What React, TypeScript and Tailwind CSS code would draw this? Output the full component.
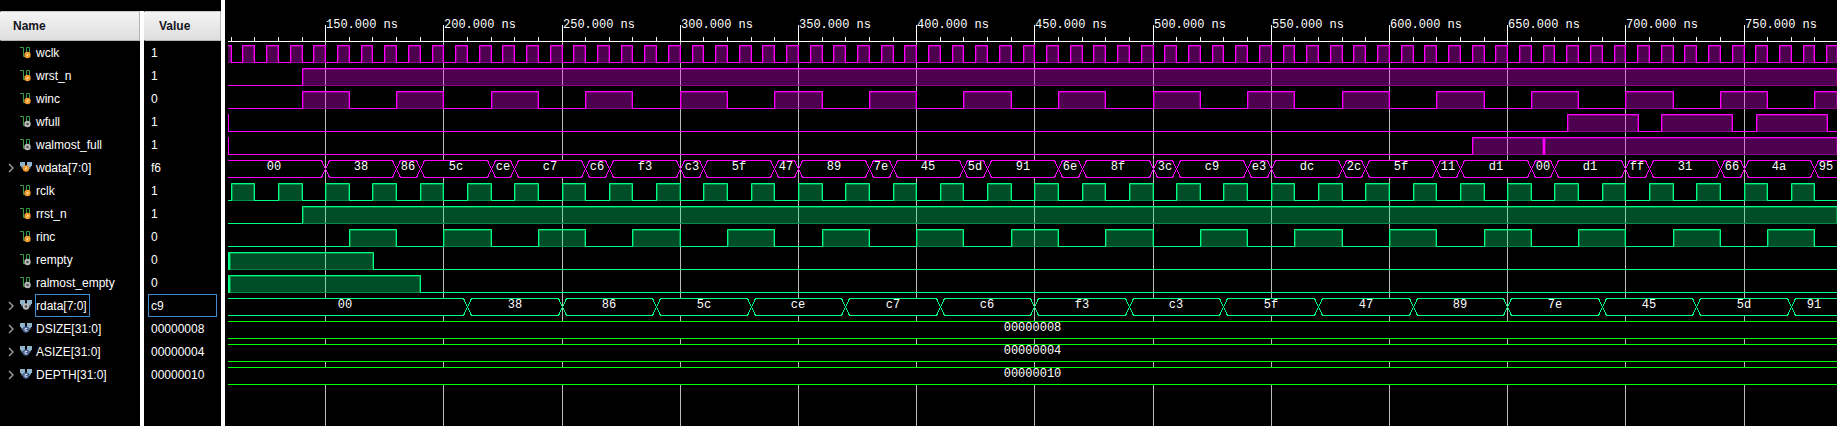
import React from "react";

type Icon = "in" | "out" | "busIn" | "busOut" | "param";
type Row = {
  name: string;
  value: string;
  icon: Icon;
  color: string;
  pulses?: [number, number][];
  bus?: [number, string][];
  constant?: string;
  spikes?: number[];
  selected?: boolean;
};

const START = 109;
const END = 789.4;
const PITCH = 23;
const FIRST = 45;
const WAVE = 17;
const MAGENTA = "#ff00ff";
const TEAL = "#00ff80";
const GREEN = "#00ff00";

// Nanoseconds to pixels inside the wave pane.
const px = (t: number) => Math.round(97.15 + (t - 150) * 2.364);

const repeat = (from: number, period: number, high: number): [number, number][] => {
  const list: [number, number][] = [];
  for (let t = from; t < END; t += period) list.push([t, Math.min(t + high, END)]);
  return list;
};

const wdata: [number, string][] = [
  [START, "00"], [150, "38"], [180, "86"], [190, "5c"], [220, "ce"], [230, "c7"],
  [260, "c6"], [270, "f3"], [300, "c3"], [310, "5f"], [340, "47"], [350, "89"],
  [380, "7e"], [390, "45"], [420, "5d"], [430, "91"], [460, "6e"], [470, "8f"],
  [500, "3c"], [510, "c9"], [540, "e3"], [550, "dc"], [580, "2c"], [590, "5f"],
  [620, "11"], [630, "d1"], [660, "00"], [670, "d1"], [700, "ff"], [710, "31"],
  [740, "66"], [750, "4a"], [780, "95"],
];

const rdata: [number, string][] = [
  [START, "00"], [210, "38"], [250, "86"], [290, "5c"], [330, "ce"], [370, "c7"],
  [410, "c6"], [450, "f3"], [490, "c3"], [530, "5f"], [570, "47"], [610, "89"],
  [650, "7e"], [690, "45"], [730, "5d"], [770, "91"],
];

const rows: Row[] = [
  { name: "wclk", value: "1", icon: "in", color: MAGENTA, pulses: repeat(105, 10, 5) },
  { name: "wrst_n", value: "1", icon: "in", color: MAGENTA, pulses: [[140, END]] },
  { name: "winc", value: "0", icon: "in", color: MAGENTA, pulses: repeat(140, 40, 20) },
  { name: "wfull", value: "1", icon: "out", color: MAGENTA, pulses: [[675.2, 705.2], [715.2, 745.2], [755.2, 785.2]], spikes: [START] },
  { name: "walmost_full", value: "1", icon: "out", color: MAGENTA, pulses: [[635, 665.2], [665.6, END]], spikes: [START] },
  { name: "wdata[7:0]", value: "f6", icon: "busIn", color: MAGENTA, bus: wdata },
  { name: "rclk", value: "1", icon: "in", color: TEAL, pulses: repeat(110, 20, 10) },
  { name: "rrst_n", value: "1", icon: "in", color: TEAL, pulses: [[140, END]] },
  { name: "rinc", value: "0", icon: "in", color: TEAL, pulses: repeat(160, 40, 20) },
  { name: "rempty", value: "0", icon: "out", color: TEAL, pulses: [[109.4, 170.3]], spikes: [START] },
  { name: "ralmost_empty", value: "0", icon: "out", color: TEAL, pulses: [[109.4, 190.3]], spikes: [START] },
  { name: "rdata[7:0]", value: "c9", icon: "busOut", color: TEAL, bus: rdata, selected: true },
  { name: "DSIZE[31:0]", value: "00000008", icon: "param", color: GREEN, constant: "00000008" },
  { name: "ASIZE[31:0]", value: "00000004", icon: "param", color: GREEN, constant: "00000004" },
  { name: "DEPTH[31:0]", value: "00000010", icon: "param", color: GREEN, constant: "00000010" },
];

function SignalIcon({ kind }: { kind: Icon }) {
  const bus = kind === "busIn" || kind === "busOut" || kind === "param";
  const dot = kind === "in" || kind === "busIn" ? "#f09a2c" : kind === "param" ? "#4a6292" : "#b8b8b8";
  const cx = bus ? 6 : 7.5;
  const cy = bus ? 7.5 : 9;
  return (
    <svg width="12" height="13" viewBox="0 0 12 13" aria-hidden="true" className="shrink-0">
      {bus ? (
        <>
          <path d="M0 1h5v5h-4v-1h-1zM7 1h5v4h-1v1h-4z" fill="#8fb4cc" />
          <path d="M1 6h3v2h-2zM8 6h3l-1 2h-2z" fill="#56707f" />
        </>
      ) : (
        <path d="M0 1.5h3.5v9h2M6.5 9V1.5h3V9" fill="none" stroke="#379b45" strokeWidth="1" />
      )}
      <circle cx={cx} cy={cy} r="3.2" fill={dot} />
      {kind === "param" ? (
        <path d="M7.2 6.5h-2v2.2h2" fill="none" stroke="#dfe8f8" strokeWidth="1" />
      ) : kind === "in" || kind === "busIn" ? (
        <path d={`M${cx - 0.8} ${cy + 1.2}l1.6-2.4`} stroke="#ffe2b0" strokeWidth="1.2" />
      ) : (
        <circle cx={cx} cy={cy} r="1.2" fill="#4c4c4c" />
      )}
    </svg>
  );
}

function Pulses({ row, y }: { row: Row; y: number }) {
  const bottom = y + WAVE;
  const spans = (row.pulses ?? []).map(([a, b]) => [px(a), px(b)]);
  return (
    <g>
      <rect x="0" y={bottom} width="100%" height="1" fill={row.color} />
      {spans.map(([a, b]) => (
        <g key={a}>
          <rect x={a} y={bottom} width={b - a} height="1" fill="#000" />
          <rect x={a} y={y} width={b - a + 1} height={WAVE + 1} fill={row.color} fillOpacity="0.3" />
          <path d={`M${a + 1.5} ${y + 1.5}H${b - 0.5}V${bottom + 0.5}H${a + 1.5}Z`} fill="none" stroke={row.color} strokeOpacity="0.35" />
          <path d={`M${a + 0.5} ${bottom + 1}V${y + 0.5}H${b + 0.5}V${bottom + 1}`} fill="none" stroke={row.color} />
        </g>
      ))}
      {row.spikes?.map((t) => (
        <rect key={t} x={px(t)} y={y} width="1" height={WAVE + 1} fill={row.color} />
      ))}
    </g>
  );
}

function Bus({ row, y }: { row: Row; y: number }) {
  const segments = row.bus ?? [];
  const top = y + 0.5;
  const bottom = y + WAVE + 0.5;
  const mid = y + 9;
  return (
    <g>
      {segments.map(([t, label], i) => {
        const first = i === 0;
        const a = first ? -5 : px(t) + 0.5;
        const next = segments[i + 1];
        const b = next ? px(next[0]) + 0.5 : 1613;
        const l = 4;
        const r = 4;
        return (
          <g key={t}>
            <path d={`M${a} ${mid}L${a + l} ${top}H${b - r}L${b} ${mid}L${b - r} ${bottom}H${a + l}Z`} fill="#000" />
            <path
              d={`M${a} ${mid}L${a + l} ${top}H${b - r}L${b} ${mid}M${a} ${mid}L${a + l} ${bottom}H${b - r}L${b} ${mid}`}
              fill="none"
              stroke={row.color}
              shapeRendering="crispEdges"
            />
            <text x={Math.floor((a + Math.min(b, 1610)) / 2)} y={y + 10} textAnchor="middle" fill="#fff">{label}</text>
          </g>
        );
      })}
    </g>
  );
}

function Constant({ row, y }: { row: Row; y: number }) {
  return (
    <g>
      <rect x="0" y={y} width="100%" height={WAVE + 1} fill="#000" />
      <rect x="0" y={y} width="100%" height="1" fill={row.color} />
      <rect x="0" y={y + WAVE} width="100%" height="1" fill={row.color} />
      <text x="50%" y={y + 10} textAnchor="middle" fill="#fff">{row.constant}</text>
    </g>
  );
}

function WavePane() {
  const minor = Array.from({ length: 68 }, (_, i) => 110 + i * 10);
  const major = minor.filter((t) => t % 50 === 0);
  return (
    <svg role="img" aria-label="Waveforms" className="block h-full w-full font-['Liberation_Mono',monospace] text-[12px]">
      {major.map((t) => (
        <rect key={t} x={px(t)} y="42" width="1" height="100%" fill="#bbb" />
      ))}
      {rows.map((row, i) => {
        const y = FIRST + i * PITCH;
        if (row.pulses) return <Pulses key={row.name} row={row} y={y} />;
        if (row.bus) return <Bus key={row.name} row={row} y={y} />;
        return <Constant key={row.name} row={row} y={y} />;
      })}
      <rect x="0" y="41" width="100%" height="1" fill="#fff" />
      {minor.map((t) => (
        <rect key={t} x={px(t)} y="37" width="1" height="4" fill="#fff" />
      ))}
      {major.map((t) => (
        <g key={t}>
          <rect x={px(t)} y="25" width="1" height="17" fill="#fff" />
          <text x={px(t) + 1} y="28" fill="#fff">{`${t}.000 ns`}</text>
        </g>
      ))}
    </svg>
  );
}

const head = "h-[30px] border border-t-[#c8c8c8] border-l-transparent border-r-[#b4b4b4] border-b-[#b4b4b4] bg-linear-to-b from-[#f4f4f4] to-[#dedee0] text-left font-bold text-[#14141c]";

export default function App() {
  return (
    <main className="flex h-screen min-h-96 w-full overflow-hidden bg-black font-['Liberation_Sans',sans-serif] text-[12px] text-white">
      <section className="flex w-[225px] shrink-0 flex-col border-r-4 border-white pt-[11px]">
        <table className="w-full table-fixed border-separate border-spacing-0">
          <colgroup>
            <col className="w-36" />
            <col />
          </colgroup>
          <thead>
            <tr>
              <th scope="col" className="border-r-4 border-white p-0">
                <div className={`${head} flex items-center pl-3`}>Name</div>
              </th>
              <th scope="col" className="p-0">
                <div className={`${head} flex items-center pl-3.5`}>Value</div>
              </th>
            </tr>
          </thead>
          <tbody>
            {rows.map((row) => (
              <tr key={row.name} className="h-[23px]">
                <td className="border-r-4 border-white p-0">
                  <div className="flex h-[23px] items-center pl-2">
                    <span className="flex w-3 shrink-0">
                      {(row.bus || row.constant) && (
                        <button type="button" aria-label={`Expand ${row.name}`} className="flex">
                          <svg width="6" height="10" viewBox="0 0 6 10" aria-hidden="true">
                            <path d="M1 1l4 4l-4 4" fill="none" stroke="#9a9a9a" strokeWidth="1.5" />
                          </svg>
                        </button>
                      )}
                    </span>
                    <SignalIcon kind={row.icon} />
                    <span className={`ml-[3px] flex h-[23px] items-center border pr-0.5 ${row.selected ? "border-[#3f8fd0]" : "border-transparent"}`}>
                      {row.name}
                    </span>
                  </div>
                </td>
                <td className="p-0">
                  <div className={`ml-1 mr-1 flex h-[23px] items-center border pl-0.5 ${row.selected ? "border-[#3f8fd0]" : "border-transparent"}`}>
                    {row.value}
                  </div>
                </td>
              </tr>
            ))}
          </tbody>
        </table>
        <div className="w-36 grow border-r-4 border-white" />
      </section>
      <section className="min-w-0 grow pl-[3px]">
        <WavePane />
      </section>
    </main>
  );
}
